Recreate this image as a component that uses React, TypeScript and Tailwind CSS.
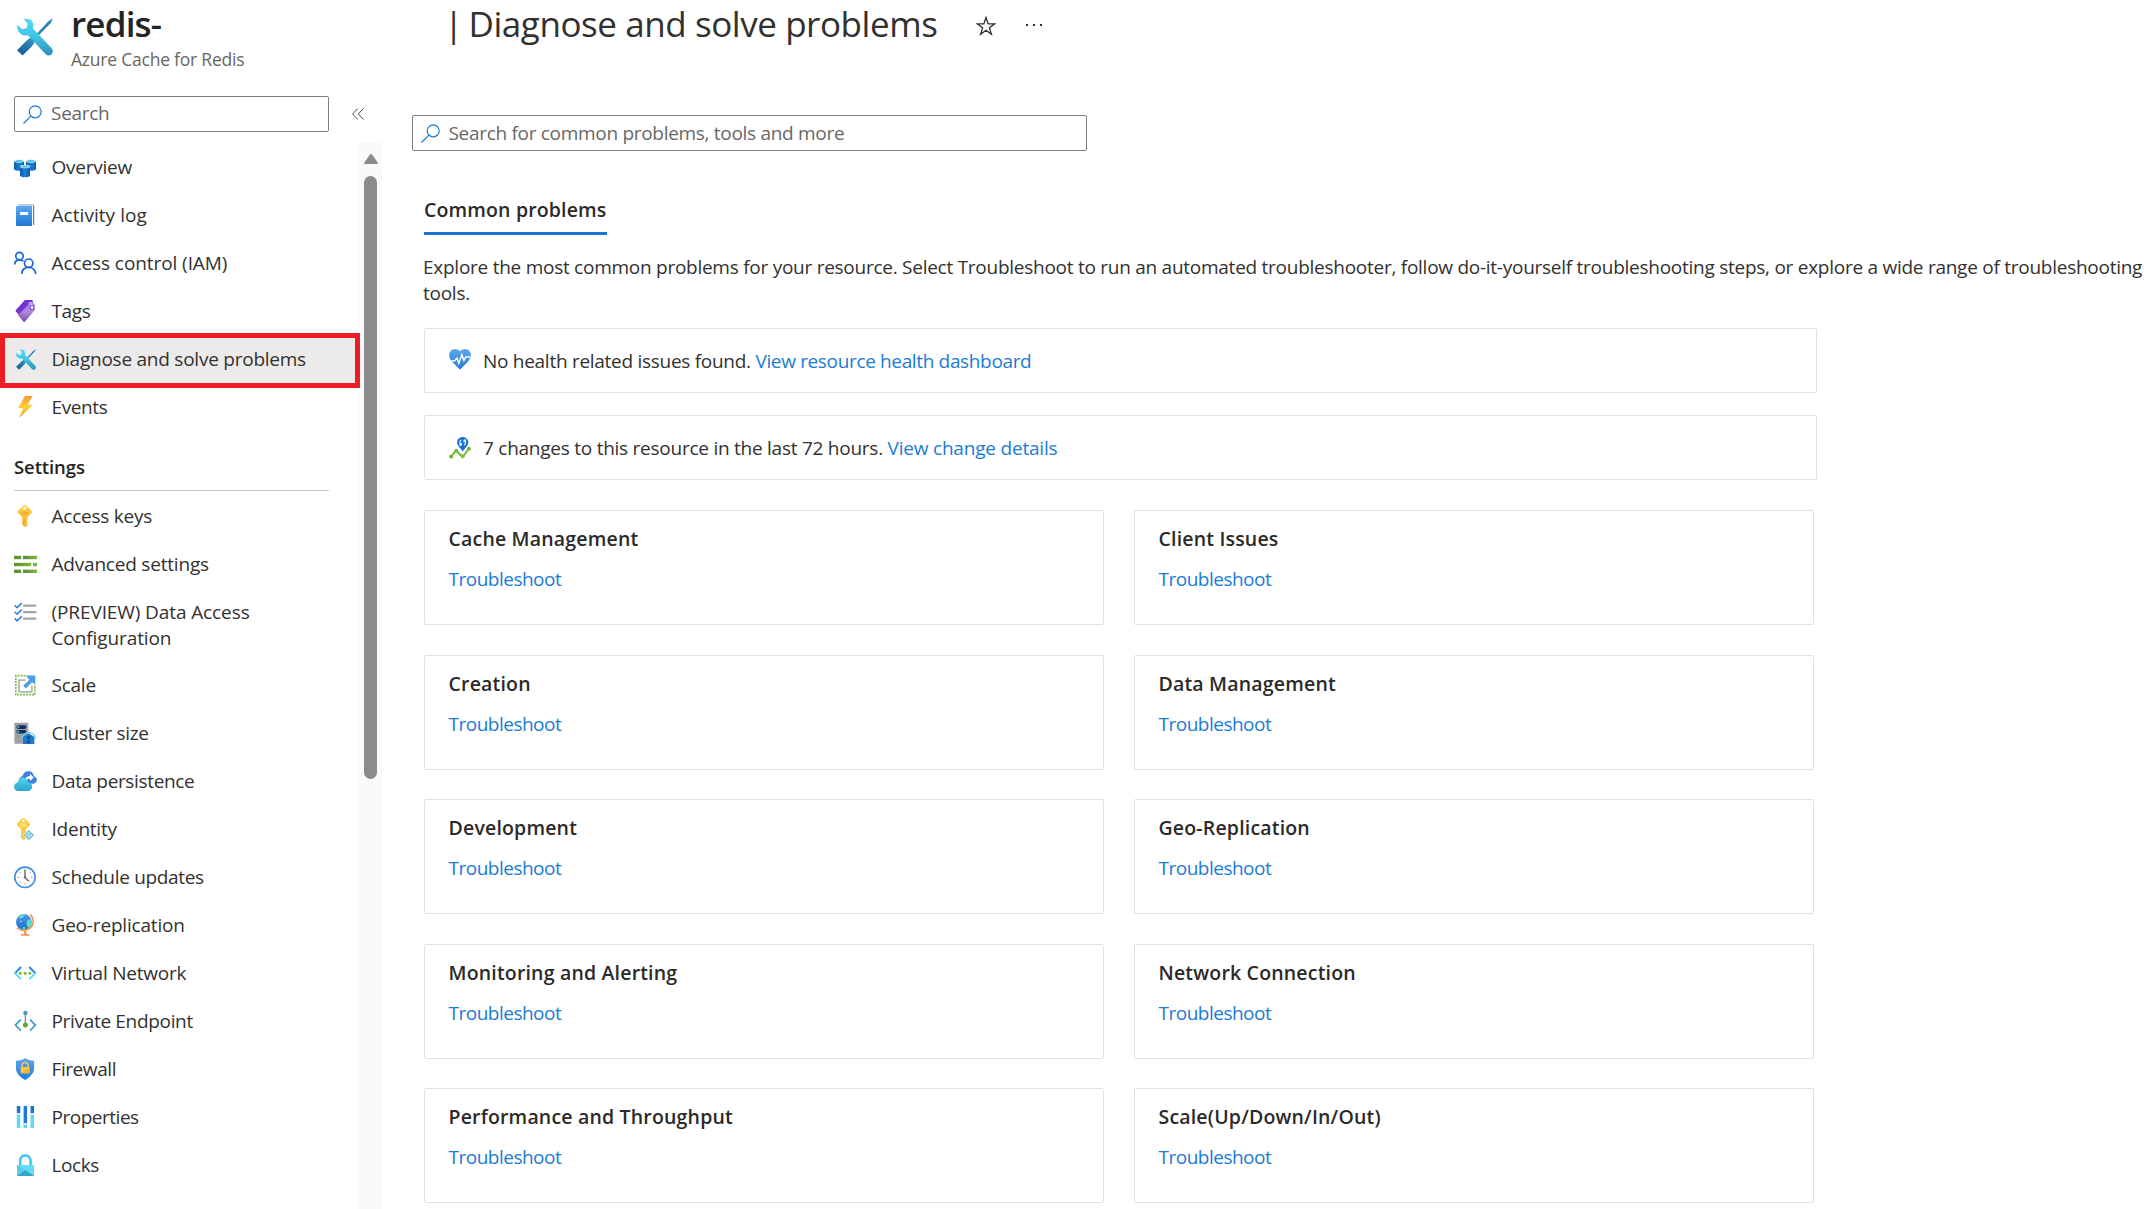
import React from "react";

type IconProps = { children: React.ReactNode };

const Glyph = ({ children }: IconProps) => (
  <svg className="mt-px h-6 w-6 shrink-0" viewBox="0 0 24 24" fill="none">
    {children}
  </svg>
);

const Gradients = () => (
  <svg className="absolute h-0 w-0" aria-hidden="true">
    <defs>
      <linearGradient id="wrench" x1="0" y1="0" x2="0" y2="1">
        <stop offset="0" stopColor="#4fdcf8" />
        <stop offset="0.5" stopColor="#41c3e2" />
        <stop offset="1" stopColor="#2b8fba" />
      </linearGradient>
      <linearGradient id="driver" x1="1" y1="0" x2="0" y2="1">
        <stop offset="0" stopColor="#3aa0c8" />
        <stop offset="0.5" stopColor="#2174a8" />
        <stop offset="1" stopColor="#175a9c" />
      </linearGradient>
      <linearGradient id="blue" x1="0" y1="0" x2="0" y2="1">
        <stop offset="0" stopColor="#5ea7ee" />
        <stop offset="1" stopColor="#1f7ad4" />
      </linearGradient>
      <linearGradient id="cyl" x1="0" y1="0" x2="1" y2="0">
        <stop offset="0" stopColor="#0b5cab" />
        <stop offset="0.5" stopColor="#1f7ddb" />
        <stop offset="1" stopColor="#0b5cab" />
      </linearGradient>
      <linearGradient id="purple" x1="0" y1="0" x2="0" y2="1">
        <stop offset="0" stopColor="#a67af4" />
        <stop offset="0.45" stopColor="#b08ad8" />
        <stop offset="1" stopColor="#7449b0" />
      </linearGradient>
      <linearGradient id="bolt" x1="0" y1="0" x2="0" y2="1">
        <stop offset="0" stopColor="#f79433" />
        <stop offset="0.5" stopColor="#fdd235" />
        <stop offset="1" stopColor="#f7952c" />
      </linearGradient>
      <linearGradient id="gold" x1="0" y1="0" x2="0" y2="1">
        <stop offset="0" stopColor="#fdd044" />
        <stop offset="1" stopColor="#f8b132" />
      </linearGradient>
      <linearGradient id="green" x1="0" y1="0" x2="1" y2="0">
        <stop offset="0" stopColor="#5a9030" />
        <stop offset="1" stopColor="#7cb93c" />
      </linearGradient>
      <linearGradient id="teal" x1="0" y1="0" x2="0" y2="1">
        <stop offset="0" stopColor="#4cd8f0" />
        <stop offset="1" stopColor="#2ea3c6" />
      </linearGradient>
      <linearGradient id="globe" x1="0" y1="0" x2="0" y2="1">
        <stop offset="0" stopColor="#5596ea" />
        <stop offset="1" stopColor="#1b70cc" />
      </linearGradient>
    </defs>
  </svg>
);

const Tools = ({ className }: { className: string }) => (
  <svg className={className} viewBox="0 0 36 38" fill="none">
    <path d="M36 .3 33.6 5.2 19.5 19.6l-1.8-1.7L31.4 3.2Z" fill="#2c86b4" />
    <path d="M14.6 19.4c1.5-.5 3.7 1.6 3.2 3.4-.3 2.200-1.600 4.300-3.300 5.900L5.600 37.500 0 32.300l9.300-9.200c2-2 3.200-3.100 5.300-3.700Z" fill="url(#driver)" />
    <path
      d="M6.900 1.200c3.200-1 7-.2 8.600 2.900 1.100 2.200 1 4.200.5 6.300L34.700 30.200c1.500 1.700 1.700 4.300 0 6s-4.400 1.700-6 0L10.900 17.200c-2.300.4-4.700.2-6.900-1.300C.9 13.900-.5 10.200.4 6.900l5 4.300 4.300-1.300 1-3.900Z"
      fill="url(#wrench)"
    />
  </svg>
);

const cylinder = (x: number, y: number, h: number) => (
  <g>
    <path d={`M${x} ${y}v${h}c0 2.400 10 2.400 10 0v-${h}Z`} fill="url(#cyl)" />
    <ellipse cx={x + 5} cy={y} rx="5" ry="1.800" fill="#d6f0fb" />
    <ellipse cx={x + 5} cy={y + 0.1} rx="3.900" ry="1.200" fill="#4cc6ea" />
  </g>
);

const Search = () => (
  <svg className="h-[19px] w-[19px] shrink-0" viewBox="0 0 19 19" fill="none" stroke="#1b79d3" strokeWidth="1.200">
    <circle cx="12.200" cy="6.800" r="6" />
    <path d="M7.900 11.100.5 18.500" />
  </svg>
);

const overview = (
  <Glyph>
    {cylinder(0, 6, 8)}
    {cylinder(12, 6, 8)}
    {cylinder(6, 11.5, 9)}
  </Glyph>
);

const activity = (
  <Glyph>
    <path d="M4 1h15a1 1 0 0 1 1 1v20H4Z" fill="#b9cfe6" />
    <path d="M17 3.500h2V22h-2Z" fill="#fff" />
    <path d="M2 4c0-.8.600-1 1.300-1H18v20H3a1 1 0 0 1-1-1Z" fill="url(#blue)" />
    <rect x="18" y="3" width="1.200" height="19" fill="#fff" />
    <rect x="19.200" y="2.500" width="1" height="19.500" fill="#2d7cc9" />
    <rect x="6" y="9" width="8.200" height="3" rx=".4" fill="#fff" />
  </Glyph>
);

const iam = (
  <Glyph>
    <g stroke="#1763dc" strokeWidth="1.700">
      <circle cx="5.500" cy="5" r="3.700" />
      <path d="M.6 13.600c.3-3 2.300-4.800 4.900-4.800 1.500 0 2.900.6 3.800 1.600" />
      <circle cx="14.700" cy="12.200" r="4.200" />
      <path d="M7.700 23c.4-4.200 3.300-6.600 7-6.600s6.700 2.400 7.100 6.600" />
    </g>
  </Glyph>
);

const tags = (
  <Glyph>
    <path d="M11.400 1h6.300c.6 0 1.100.4 1.100 1v4.500L6.200 17.500 1.900 12.600c-.4-.5-.4-1 0-1.500L10.400 1.500c.300-.3.600-.5 1-.5Z" fill="#7434d2" />
    <path d="M15.400 4.600h4.400c.600 0 1 .4 1 1v4.900c0 .5-.200.900-.500 1.300L10.800 22.800c-.4.400-.8.400-1.200 0L4 16.200Z" fill="url(#purple)" />
    <circle cx="18.100" cy="8.600" r="1.900" fill="#fff" stroke="#5c2a9e" strokeWidth=".9" />
    <path d="M15.300 5.500V3.600h2.500v3" stroke="#fff" strokeWidth=".8" />
  </Glyph>
);

const events = (
  <Glyph>
    <path d="M11 1h7.700l-5 8.600 5 .7L5 23l4.300-9.400L4 13Z" fill="url(#bolt)" />
  </Glyph>
);

const keys = (
  <Glyph>
    <path d="M10.700 1c.8 0 1.300.3 1.900.9l4.700 4.800c.8.800.8 1.700 0 2.500l-3.800 4v2.300l-1 1 1 1.100-1 1.300 1 1.200v1.200L10.700 23l-2.500-2V13.200l-4-4c-.8-.800-.8-1.700 0-2.500l4.700-4.800c.5-.600 1-.9 1.800-.9Z" fill="url(#gold)" />
    <circle cx="10.700" cy="4.200" r="1.600" fill="#fff" />
    <path d="M7 8.400h7.500M7.800 10.300h5.900" stroke="#eda12b" strokeWidth=".9" />
    <path d="M10 14v6.500" stroke="#eda12b" strokeWidth=".9" />
  </Glyph>
);

const advanced = (
  <Glyph>
    <rect x="0" y="3.800" width="7.200" height="3.400" fill="#5f9732" />
    <rect x="9" y="3.800" width="14" height="3.400" fill="url(#green)" />
    <rect x="0" y="10.800" width="17.200" height="3.400" fill="url(#green)" />
    <rect x="19" y="10.800" width="4" height="3.400" fill="#7cb93c" />
    <rect x="0" y="17.600" width="7.200" height="3.400" fill="#5f9732" />
    <rect x="9" y="17.600" width="14" height="3.400" fill="url(#green)" />
  </Glyph>
);

const checklist = (
  <Glyph>
    <path d="M10 5.600h11.500M10 12.200h11.500M10 18.700h11.500" stroke="#a3a3a3" strokeWidth="2.200" strokeLinecap="round" />
    <path d="m.6 5.300 2.400 2.400 4.800-4.500M.6 11.800l2.400 2.400L7.800 9.700M.6 18.400l2.400 2.400 4.800-4.500" stroke="#2f86e0" strokeWidth="1.600" />
  </Glyph>
);

const scale = (
  <Glyph>
    <path d="M11.500 2.700H1.800v19h19V12" stroke="#7fbf3f" strokeWidth="1.700" strokeDasharray="1.900 1.100" />
    <path d="M11.500 7.200H5v11.600h12.800v-6" stroke="#b5b5b5" strokeWidth="1.800" />
    <path d="m9.300 12.800 6-6-3.600-4.400h9.600v9.400l-3.200-2.600-6.300 6.200Z" fill="#4b9fe9" />
  </Glyph>
);

const cluster = (
  <Glyph>
    <rect x=".4" y="1.700" width="13.800" height="21" rx=".6" fill="#a0a0a0" />
    <rect x="2.400" y="4.300" width="10" height="3.600" rx="1.800" fill="#0b2f66" />
    <rect x="2.400" y="9" width="10" height="3.600" rx="1.800" fill="#0b2f66" />
    <circle cx="4.400" cy="6.100" r="1" fill="#50c8ec" />
    <circle cx="4.400" cy="10.800" r="1" fill="#50c8ec" />
    <path d="M9 23v-7l5.700-3.700 5.700 3.700v7Z" fill="#2277cf" />
    <path d="M8 17.600c.5-3.900 3.200-6 6.700-6s6.200 2.100 6.700 6" stroke="#59d3f3" strokeWidth="1.400" />
    <rect x="13" y="15.200" width="3.300" height="2.700" fill="#0c4a91" />
    <circle cx="14.600" cy="20.700" r="1.900" fill="#0f59a8" />
  </Glyph>
);

const cloud = (
  <Glyph>
    <path d="M9.500 14.800c-2.600 0-4.300-1.600-4.300-3.900 0-2 1.400-3.400 3.300-3.700C9.300 4 11.500 2.300 14.300 2.300c3.200 0 5.300 2 5.700 4.900 1.700.3 2.800 1.700 2.800 3.500 0 2.400-1.700 4.100-4.300 4.100Z" fill="#3c82e2" />
    <path d="M11 11c.5-2.700 2.300-4 5-4V4.800l3.600 3.600-3.600 3.500V9.700c-2 0-3.200.8-3.800 2.300Z" fill="#fff" />
    <path d="M4.700 22C1.800 22 0 20.200 0 17.700c0-2.300 1.500-3.900 3.600-4.300.7-3.200 2.700-4.700 5.400-4.700 2.900 0 4.900 1.800 5.400 4.600 2.200.2 3.800 1.900 3.800 4.200 0 2.600-1.900 4.500-4.600 4.500Z" fill="url(#teal)" />
  </Glyph>
);

const identity = (
  <Glyph>
    <path d="M9.400 1c.7 0 1.200.3 1.700.8l4.300 4.300c.8.800.8 1.700 0 2.500l-3.500 3.600V22L9.400 23 7 21V12.200L3.400 8.600c-.8-.8-.8-1.700 0-2.500l4.300-4.300C8.200 1.300 8.700 1 9.400 1Z" fill="#fbcb3b" />
    <circle cx="9.400" cy="3.900" r="1.400" fill="#fff" />
    <path d="M5.500 7h7.700M5.500 8.800h7.700" stroke="#fdf0b8" strokeWidth=".8" />
    <path d="m14.800 12.800 5.500 5.500-5.500 5.200-5.400-5.200Z" fill="#5fb2cf" stroke="#fff" strokeWidth=".7" />
    <path d="m14.800 15 3.300 3.300-3.300 3-3.300-3Zm0 0v6.300m-3.300-3h6.600" stroke="#d6f2fa" strokeWidth=".8" />
  </Glyph>
);

const clock = (
  <Glyph>
    <circle cx="11" cy="12.300" r="10.200" fill="#fdfdfe" stroke="#3f8ee0" strokeWidth="1.600" />
    <path d="M11 4.500v8l3.800 3.700" stroke="#707070" strokeWidth="1.500" />
    <path d="M3.700 12.300h1.300M17 12.300h1.300M11 18.300v1.300M5.800 7.100l.8.800M16.200 7.100l-.8.800M5.800 17.500l.8-.8" stroke="#8f8f8f" strokeWidth="1" />
    <circle cx="11" cy="12.300" r="1.200" fill="#707070" />
  </Glyph>
);

const globe = (
  <Glyph>
    <circle cx="9.900" cy="9" r="7.900" fill="url(#globe)" />
    <path d="M6.500 2c2-.9 3.500-.9 5-.7l-2.200 3-2.600 1.400-2-1ZM13 7.500l3.200-1.600c1.400 1.500 1.800 4.200.9 6.500l-3 2.500-1.600-3.400Z" fill="#55dfc4" />
    <circle cx="7" cy="8.400" r=".9" fill="#7fe5f5" />
    <path d="m8.500 14.500 3-.8-.5 3-2-.4Z" fill="#55dfc4" />
    <path d="M16.200 1.400c4 3.900 4 9.600.6 13-3.600 3.700-9.600 4-13.800.6" stroke="#ee934e" strokeWidth="1.500" />
    <path d="M11.200 17.800v3.800" stroke="#ee934e" strokeWidth="2" />
    <path d="M7 22.400c0-1 1.300-1.300 4.200-1.300s4.200.3 4.200 1.300Z" fill="#ee934e" stroke="#ee934e" strokeWidth=".5" />
  </Glyph>
);

const vnet = (
  <Glyph>
    <path d="M.9 12.400 7 6" stroke="#2484dc" strokeWidth="1.900" />
    <path d="M.6 11.800 7 18.200" stroke="#55dbf5" strokeWidth="1.900" />
    <path d="M21.400 12.400 15.300 6" stroke="#2484dc" strokeWidth="1.900" />
    <path d="m21.700 11.800-6.400 6.400" stroke="#55dbf5" strokeWidth="1.900" />
    <circle cx="6.400" cy="12.200" r="1.500" fill="#77bb31" />
    <circle cx="11.200" cy="12.200" r="1.500" fill="#77bb31" />
    <circle cx="15.900" cy="12.200" r="1.500" fill="#77bb31" />
  </Glyph>
);

const endpoint = (
  <Glyph>
    <path d="m6.700 10.700-5.300 5.400 5.300 5.600M16 10.700l5.300 5.400-5.300 5.600" stroke="#3f9bcb" strokeWidth="1.700" />
    <path d="M11.400 5v9" stroke="#8e8e8e" strokeWidth="1.400" />
    <circle cx="11.400" cy="3.900" r="2.200" fill="#3f9bcb" />
    <circle cx="11.400" cy="16.100" r="2.500" fill="#5ea826" />
  </Glyph>
);

const shield = (
  <Glyph>
    <path d="M2 3.700c3.900 0 6.300-.7 9.100-2.700 2.700 2 5.200 2.700 9 2.700v7.600c0 5.200-4.300 9-9 11.700C6.300 20.300 2 16.500 2 11.300Z" fill="url(#blue)" />
    <path d="M8 10.300V8.600a3.100 3.100 0 0 1 6.200 0v1.700" stroke="#f2c75c" strokeWidth="1.500" />
    <rect x="6.700" y="10" width="8.800" height="6.300" rx=".5" fill="#fcc93c" />
    <path d="m6.700 16.300 8.800-5.800v5.800Z" fill="#f4b32f" />
  </Glyph>
);

const properties = (
  <Glyph>
    <rect x="2.800" y="1" width="3.500" height="7" fill="#1a73cc" />
    <rect x="2.800" y="10" width="3.500" height="13" fill="#5bdcf6" />
    <rect x="9.600" y="1" width="3.500" height="17" fill="#1f78d2" />
    <rect x="9.600" y="20" width="3.500" height="3" fill="#5bdcf6" />
    <rect x="16.500" y="1" width="3.500" height="7" fill="#1a73cc" />
    <rect x="16.500" y="10" width="3.500" height="13" fill="#5bdcf6" />
    <path d="M2.300 9h4.500M9.100 19h4.500M16 9h4.500" stroke="#d2d6da" strokeWidth="1.600" />
  </Glyph>
);

const lock = (
  <Glyph>
    <path d="M6.200 12.500V7.600a5.200 5.200 0 0 1 10.400 0v4.900" stroke="#41c8ea" strokeWidth="2.600" />
    <rect x="3" y="12" width="17" height="11" rx=".6" fill="#62dcf6" />
    <path d="m3 12 8.500 5.500L3 23Z" fill="#5bc8e4" />
    <path d="m3 23 8.500-5.800L20 23Z" fill="#36a2c6" />
  </Glyph>
);

type Item = [label: string, icon: React.ReactNode, tracking?: string];

const resourceItems: Item[] = [
  ["Overview", overview],
  ["Activity log", activity, "tracking-[0.05px]"],
  ["Access control (IAM)", iam, "tracking-[-0.08px]"],
  ["Tags", tags, "tracking-[-0.4px]"],
  ["Diagnose and solve problems", <Tools key="t" className="mx-0.5 mt-[3px] h-[21px] w-5 shrink-0" />],
  ["Events", events, "tracking-[-0.4px]"],
];

const settingsItems: Item[] = [
  ["Access keys", keys],
  ["Advanced settings", advanced, "tracking-[-0.2px]"],
  ["(PREVIEW) Data Access Configuration", checklist, "tracking-[-0.1px]"],
  ["Scale", scale],
  ["Cluster size", cluster, "tracking-[-0.32px]"],
  ["Data persistence", cloud, "tracking-[-0.35px]"],
  ["Identity", identity],
  ["Schedule updates", clock, "tracking-[-0.32px]"],
  ["Geo-replication", globe, "tracking-[-0.18px]"],
  ["Virtual Network", vnet],
  ["Private Endpoint", endpoint, "tracking-[-0.32px]"],
  ["Firewall", shield, "tracking-[-0.42px]"],
  ["Properties", properties, "tracking-[-0.48px]"],
  ["Locks", lock, "tracking-[-0.4px]"],
];

const NavItem = ({ item: [label, icon, tracking = "tracking-[-0.24px]"] }: { item: Item }) => {
  const active = label === "Diagnose and solve problems";
  return (
    <a
      className={
        active
          ? "relative flex w-[355px] items-start gap-[13.5px] bg-[#edebe9] py-[11px] pl-3.5"
          : "flex w-[355px] items-start gap-[13.5px] py-[11px] pl-3.5"
      }
    >
      {active && <span className="absolute -top-0.5 left-0 h-[55px] w-[360px] border-[5px] border-[#ee1c25]" />}
      {icon}
      <span className={`w-[235px] text-[19px] leading-[26px] ${tracking}`}>
        <span className={active ? "whitespace-nowrap" : ""}>{label}</span>
      </span>
    </a>
  );
};

const problems = [
  "Cache Management",
  "Client Issues",
  "Creation",
  "Data Management",
  "Development",
  "Geo-Replication",
  "Monitoring and Alerting",
  "Network Connection",
  "Performance and Throughput",
  "Scale(Up/Down/In/Out)",
];

const Heart = () => (
  <svg className="-mt-[3px] h-[21px] w-[22px] shrink-0" viewBox="0 0 22 21" fill="none">
    <path d="M11 2.400C14-.8 18.200-.4 20.300 2c2.200 2.500 2 6.300-.3 9.200C17.900 14 14 17.500 11 20.700 8 17.500 4.100 14 2 11.200-.3 8.300-.5 4.500 1.700 2 3.800-.4 8-.8 11 2.400Z" fill="url(#blue)" />
    <path d="M2.500 11.800h3.200l2.200-2.500 1.900 5 3.100-8.500 2 5.800 1.900-3.700h4.400" stroke="#fff" strokeWidth="1.500" />
  </svg>
);

const Changes = () => (
  <svg className="h-[22px] w-[22px] shrink-0" viewBox="0 0 22 22" fill="none">
    <path d="m2 19.700 5.200-6 6.500 6.300 6.200-8.500" stroke="#76b82f" strokeWidth="2" />
    <circle cx="2.200" cy="19.600" r="2.100" fill="#76b82f" />
    <circle cx="7.300" cy="13.700" r="1.900" fill="#76b82f" />
    <circle cx="13.700" cy="19.300" r="2" fill="#86c440" />
    <circle cx="19.900" cy="11.800" r="2" fill="#76b82f" />
    <path d="M13.700 0c3.300 0 5.600 2.400 5.600 5.500 0 3.500-3.300 5.200-5.600 9.300-2.300-4.100-5.600-5.800-5.600-9.300C8.100 2.400 10.400 0 13.700 0Z" fill="#1b75cf" />
    <path d="M12.300 3c-2 1-2 4 0 5.200m0 0V6m0 2.200H10M15.100 8.200c2-1 2-4 0-5.200m0 0v2.200m0-2.200h2.200" stroke="#fff" strokeWidth="1.100" />
  </svg>
);

type NoticeProps = { icon: React.ReactNode; text: string; link: string; tracking: string; linkTracking: string };

const Notice = ({ icon, text, link, tracking, linkTracking }: NoticeProps) => (
  <div className="flex h-[65px] w-[1393px] items-center rounded-[2px] border border-[#e1e1e1] pl-6">
    {icon}
    <p className={`ml-3 mt-0.5 whitespace-pre text-[19px] ${tracking}`}>
      {text} <a className={`text-[#1b7bd5] ${linkTracking}`}>{link}</a>
    </p>
  </div>
);

export default function App() {
  return (
    <div className="h-[1209px] w-[2151px] overflow-hidden bg-white font-['Open_Sans',sans-serif] text-[#323130]">
      <Gradients />
      <header className="flex h-[96px] items-start">
        <Tools className="ml-[17px] mt-[18px] h-[38px] w-9 shrink-0" />
        <div className="ml-[18px] w-[373px]">
          <h1 className="h-[47px] text-[35px] font-semibold leading-[47px] tracking-[-0.8px] text-[#242424]">redis-</h1>
          <p className="text-[17.5px] leading-[24px] tracking-[-0.22px] text-[#686664]">Azure Cache for Redis</p>
        </div>
        <h2 className="w-[532px] whitespace-nowrap text-[35px] leading-[47px] tracking-[-0.43px]">
          <span className="-mr-[3px]">|</span> Diagnose and solve problems
        </h2>
        <svg className="mt-4 h-5 w-5" viewBox="0 0 20 20" fill="none" stroke="#323130" strokeWidth="1.300">
          <path d="m10 1.500 2.100 6.300h6.600l-5.300 4 2 6.500-5.400-4-5.400 4 2-6.500-5.300-4h6.600Z" />
        </svg>
        <svg className="ml-[30px] mt-[23px] h-1 w-4" viewBox="0 0 16 4" fill="#323130">
          <path d="M0 1h2v2H0ZM7 1h2v2H7ZM14 1h2v2h-2Z" />
        </svg>
      </header>

      <div className="flex">
        <aside className="w-[382px] shrink-0">
          <div className="flex h-[46px] items-start pl-3.5">
            <div className="flex h-9 w-[315px] items-center rounded-[2px] border border-[#7f7d7b] pl-2">
              <Search />
              <span className="-mt-0.5 ml-[9px] text-[19px] leading-[34px] tracking-[-0.28px] text-[#696765]">Search</span>
            </div>
            <svg className="ml-[23px] mt-3 h-3 w-3" viewBox="0 0 12 12" fill="none" stroke="#4a4846" strokeWidth="1">
              <path d="M5.800.5.6 6l5.200 5.500M11.500.5 6.300 6l5.200 5.500" />
            </svg>
          </div>
          <div className="flex h-[1067px]">
            <nav className="w-[359px] pt-px">
              {resourceItems.map((item) => (
                <NavItem key={item[0]} item={item} />
              ))}
              <h3 className="mb-px ml-3.5 h-[60px] w-[315px] border-b border-[#c8c6c4] pt-[23px] text-[18.5px] font-semibold leading-[25px] tracking-[-0.1px] text-[#242424]">
                Settings
              </h3>
              {settingsItems.map((item) => (
                <div key={item[0]} className={item[0].startsWith("(") ? "-mb-px" : ""}>
                  <NavItem item={item} />
                </div>
              ))}
            </nav>
            <div className="flex w-[23px] flex-col items-center bg-[#fafafa] pt-3">
              <svg className="h-2.5 w-3.5" viewBox="0 0 14 10" fill="#8b8b8b">
                <path d="M5.800.7c.7-.9 1.700-.9 2.400 0L13.700 8.500c.5.8.1 1.500-.8 1.500H1.100c-.9 0-1.300-.7-.8-1.500Z" />
              </svg>
              <div className="mt-3 h-[603px] w-[13px] rounded-full bg-[#8b8b8b]" />
            </div>
          </div>
        </aside>

        <main className="flex-1 pl-[30px] pt-[19px]">
          <div className="flex h-9 w-[675px] items-center rounded-[2px] border border-[#7f7d7b] pl-2">
            <Search />
            <span className="ml-[8.5px] text-[19px] leading-[34px] tracking-[-0.3px] text-[#696765]">
              Search for common problems, tools and more
            </span>
          </div>
          <div className="ml-3 mt-[44px]">
            <div className="h-[40px] w-[183px] whitespace-nowrap border-b-[3px] border-[#1b75cf] text-[19.5px] font-semibold leading-[29px] tracking-[0.15px] text-[#2b2a29]">
              Common problems
            </div>
            <p className="-ml-px mt-[19px] w-[1728px] text-[19px] leading-[26px] tracking-[-0.26px]">
              Explore the most common problems for your resource. Select Troubleshoot to run an automated troubleshooter, follow
              do-it-yourself troubleshooting steps, or explore a wide range of troubleshooting tools.
            </p>
            <div className="mt-[22px] flex flex-col gap-[22px]">
              <Notice
                icon={<Heart />}
                text="No health related issues found."
                link="View resource health dashboard"
                tracking="tracking-[-0.28px]"
                linkTracking="tracking-[-0.35px]"
              />
              <Notice
                icon={<Changes />}
                text="7 changes to this resource in the last 72 hours."
                link="View change details"
                tracking="tracking-[-0.25px]"
                linkTracking="tracking-[-0.2px]"
              />
            </div>
            <div className="mt-[30px] grid w-[1390px] grid-cols-2 gap-x-[30px] gap-y-[29.5px]">
              {problems.map((title) => (
                <section key={title} className="h-[115px] rounded-[2px] border border-[#e1e1e1] pl-[23.5px] pt-[15px]">
                  <h3 className="text-[19.5px] font-semibold leading-[26px] tracking-[0.18px] text-[#2b2a29]">{title}</h3>
                  <a className="mt-[14px] block text-[19px] leading-[26px] tracking-[-0.5px] text-[#1b7bd5]">Troubleshoot</a>
                </section>
              ))}
            </div>
          </div>
        </main>
      </div>
    </div>
  );
}
